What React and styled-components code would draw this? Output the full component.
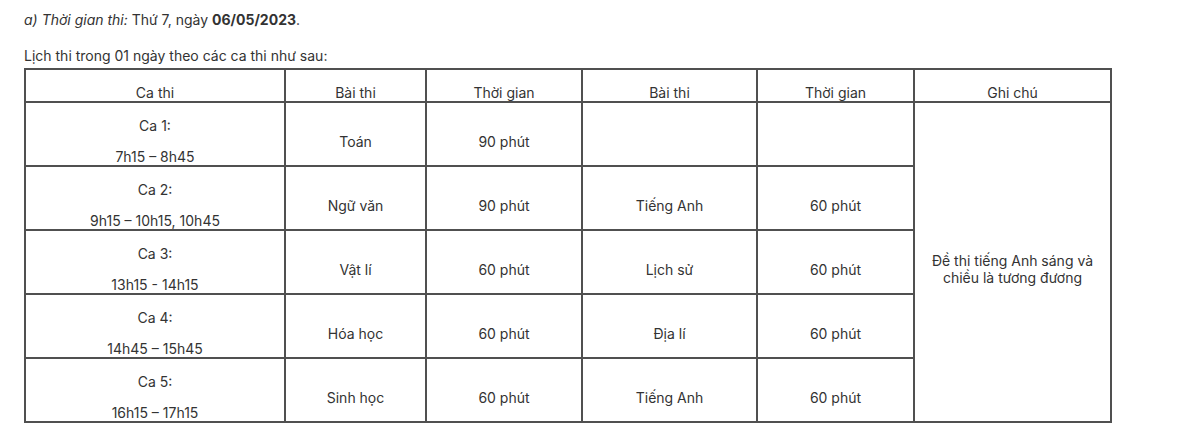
import React from "react";
import styled, { createGlobalStyle } from "styled-components";

const Global = createGlobalStyle`
  html, body { margin: 0; padding: 0; background: #fff; }
  body { font-family: Inter, "Noto Sans", sans-serif; color: #333; }
`;

const Page = styled.div`
  padding: 10px 0 0 24px;
  width: 1090px;
`;

const Para = styled.p`
  margin: 0 0 ${(p) => p.$mb || 0}px;
  font-size: 14px;
  line-height: 20px;
  color: #333;
`;

const Table = styled.table`
  border-collapse: collapse;
  table-layout: fixed;
  width: 1088px;
  font-size: 14px;
  color: #333;
  margin-top: 0;
`;

const Cell = styled.td`
  border: 2px solid #505050;
  padding: 0 6px;
  text-align: center;
  vertical-align: middle;
  height: ${(p) => p.$h || 62}px;
`;

const Head = styled(Cell).attrs({ as: "th" })`
  font-weight: 400;
  height: 31px;
`;

const Line = styled.p`
  margin: 14px 0 0;
  line-height: 17px;
`;

const cols = [260, 141, 156, 175, 157, 197];

const rows = [
  ["Ca 1:", "7h15 – 8h45", "Toán", "90 phút", "", ""],
  ["Ca 2:", "9h15 – 10h15, 10h45", "Ngữ văn", "90 phút", "Tiếng Anh", "60 phút"],
  ["Ca 3:", "13h15 - 14h15", "Vật lí", "60 phút", "Lịch sử", "60 phút"],
  ["Ca 4:", "14h45 – 15h45", "Hóa học", "60 phút", "Địa lí", "60 phút"],
  ["Ca 5:", "16h15 – 17h15", "Sinh học", "60 phút", "Tiếng Anh", "60 phút"],
];

export default function App() {
  return (
    <>
      <Global />
      <Page>
        <Para $mb={16}>
          <em>a) Thời gian thi:</em> Thứ 7, ngày <strong>06/05/2023</strong>.
        </Para>
        <Para $mb={2}>Lịch thi trong 01 ngày theo các ca thi như sau:</Para>
        <Table>
          <colgroup>
            {cols.map((w, i) => (
              <col key={i} style={{ width: w }} />
            ))}
          </colgroup>
          <thead>
            <tr>
              {["Ca thi", "Bài thi", "Thời gian", "Bài thi", "Thời gian", "Ghi chú"].map((h, i) => (
                <Head key={i}>
                  <Line>{h}</Line>
                </Head>
              ))}
            </tr>
          </thead>
          <tbody>
            {rows.map((r, i) => (
              <tr key={i}>
                <Cell>
                  <Line>{r[0]}</Line>
                  <Line>{r[1]}</Line>
                </Cell>
                <Cell>{r[2] && <Line>{r[2]}</Line>}</Cell>
                <Cell>{r[3] && <Line>{r[3]}</Line>}</Cell>
                <Cell>{r[4] && <Line>{r[4]}</Line>}</Cell>
                <Cell>{r[5] && <Line>{r[5]}</Line>}</Cell>
                {i === 0 && (
                  <Cell rowSpan={5}>
                    <Line>
                      Đề thi tiếng Anh sáng và
                      <br />
                      chiều là tương đương
                    </Line>
                  </Cell>
                )}
              </tr>
            ))}
          </tbody>
        </Table>
      </Page>
    </>
  );
}
